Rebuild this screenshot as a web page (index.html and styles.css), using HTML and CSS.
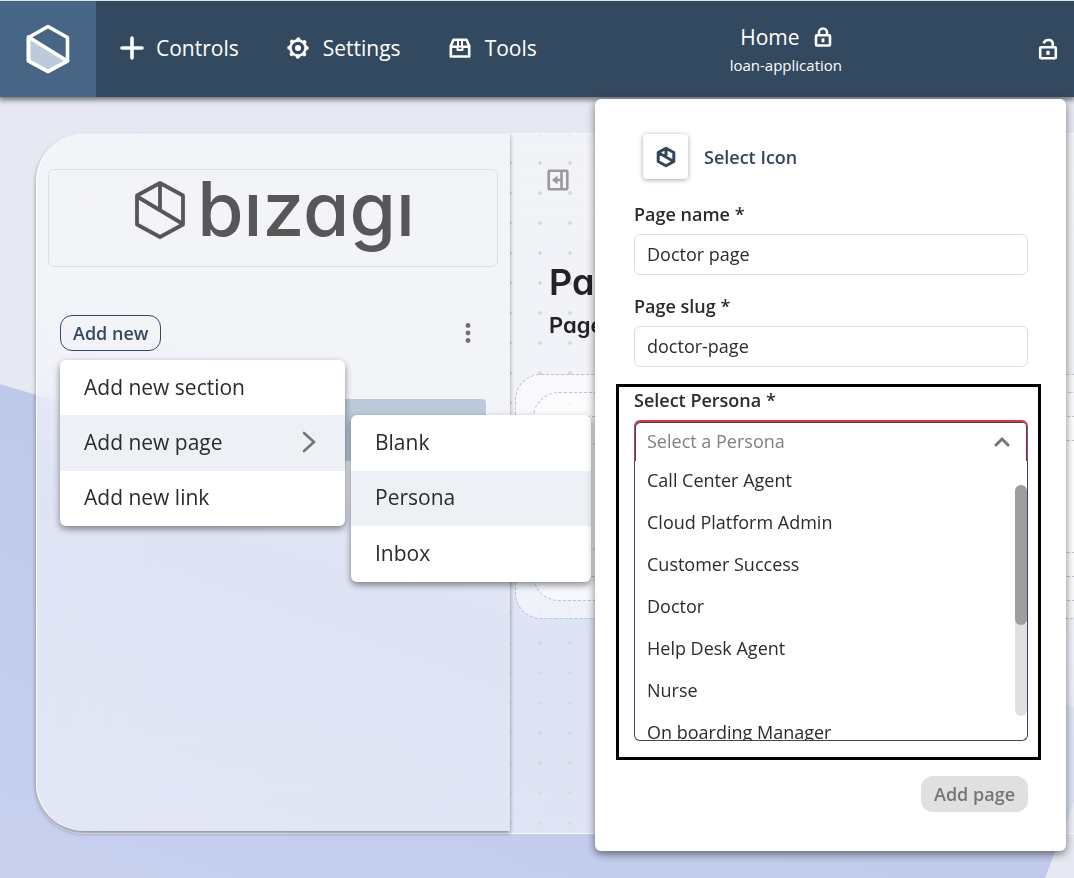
FILE: index.html
```html
<!DOCTYPE html>
<html lang="en">
<head>
<meta charset="utf-8">
<meta name="viewport" content="width=device-width, initial-scale=1">
<title>Home - loan-application</title>
<link rel="stylesheet" href="styles.css">
</head>
<body>
<header class="topbar">
  <a class="brand" href="#" aria-label="Start">
    <svg width="44" height="50" viewBox="0 0 44 50" fill="none" stroke="#fff" stroke-width="3.6" stroke-linejoin="round">
      <path d="M2.5 13v24L22 47.5 41.5 37z" fill="#bccbdc"/>
      <path d="M22 2.500L41.500 13.500V37L22 47.500 2.500 37V13.500z"/>
    </svg>
  </a>
  <nav class="tools">
    <button class="tool" type="button">
      <svg width="24" height="24" viewBox="0 0 24 24" stroke="#fff" stroke-width="3.6" stroke-linecap="round"><path d="M12 2v20M2 12h20"/></svg>
      Controls
    </button>
    <button class="tool" type="button">
      <svg width="24" height="22" viewBox="0 0 24 22" fill="none" stroke="#fff">
        <circle cx="11" cy="11" r="7.600" stroke-width="2.600"/>
        <circle cx="11" cy="11" r="8.800" stroke-width="4" stroke-linecap="round" stroke-dasharray="0.100 6.812"/>
        <circle cx="11" cy="11" r="3" fill="#fff" stroke="none"/>
      </svg>
      Settings
    </button>
    <button class="tool" type="button">
      <svg width="24" height="22" viewBox="0 0 24 22" fill="none" stroke="#fff" stroke-width="2.600" stroke-linejoin="round">
        <path d="M1.800 9 4.500 2.800h13L20.200 9v10.500H1.800zM1.800 9.800h7M13.200 9.800h7"/>
        <path d="M8.500 9.500h5v3.500h-5zM9 9V3M13 9V3" stroke-width="2"/>
      </svg>
      Tools
    </button>
  </nav>
  <div class="page-id">
    <div class="page-name">Home
      <svg width="18" height="20" viewBox="0 0 18 20" fill="none" stroke="#fff" stroke-width="2.600"><rect x="2" y="8.200" width="14" height="10.300" rx="1"/><path d="M5 8V5.500a4 4 0 0 1 8 0V8"/><path d="M9 11.300v4" stroke-width="2.800"/></svg>
    </div>
    <div class="page-slug">loan-application</div>
  </div>
  <button class="lock" type="button" aria-label="Unlock">
    <svg width="20" height="22" viewBox="0 0 20 22" fill="none" stroke="#fff" stroke-width="2.600"><rect x="2.200" y="9.300" width="15.600" height="11" rx="1"/><path d="M5.600 5.400C6.400 2.800 8.500 2 10.600 2c2.700 0 4.200 1.800 4.200 4.200V9"/><path d="M10 12.800v4" stroke-width="3.200"/></svg>
  </button>
</header>

<main class="stage">
  <div class="workspace">
    <aside class="sidebar">
      <div class="logo">
        <svg width="50" height="58" viewBox="0 0 50 58" fill="none" stroke="#575757" stroke-width="3.800" stroke-linejoin="round"><path d="M25 2 48 14.500v29L25 56 2 43.500v-29zM2 15.500 48 43M25 2v27"/></svg>
        <span class="wordmark">bızagı</span>
      </div>
      <div class="sidebar-row">
        <button class="add-new" type="button">Add new</button>
        <button class="kebab" type="button" aria-label="More options">
          <svg width="6" height="20" viewBox="0 0 6 20" fill="#6e6e6e"><circle cx="3" cy="2.500" r="2.400"/><circle cx="3" cy="10" r="2.400"/><circle cx="3" cy="17.500" r="2.400"/></svg>
        </button>
        <div class="menu" role="menu">
          <button class="menu-item" type="button" role="menuitem">Add new section</button>
          <button class="menu-item active" type="button" role="menuitem">Add new page
            <svg width="14" height="22" viewBox="0 0 14 22" fill="none" stroke="#757575" stroke-width="2.600" stroke-linecap="round"><path d="M2 2l10 9L2 20"/></svg>
          </button>
          <button class="menu-item" type="button" role="menuitem">Add new link</button>
          <div class="menu submenu" role="menu">
            <button class="menu-item" type="button" role="menuitem">Blank</button>
            <button class="menu-item active" type="button" role="menuitem">Persona</button>
            <button class="menu-item" type="button" role="menuitem">Inbox</button>
          </div>
        </div>
      </div>
      <a class="current-page" href="#" aria-label="Current page"></a>
    </aside>
    <section class="canvas">
      <button class="collapse" type="button" aria-label="Collapse menu">
        <svg width="22" height="22" viewBox="0 0 22 22" fill="none" stroke="#9a9a9a" stroke-width="2.600"><rect x="1.700" y="1.700" width="18.600" height="18.600" rx="1"/><path d="M14.500 2v18M14 11H8"/><path d="M10.500 6.500v9L5 11z" fill="#9a9a9a" stroke="none"/></svg>
      </button>
      <h1 class="title">Page</h1>
      <h2 class="subtitle">Page</h2>
      <div class="zone"><div class="zone zone-row"><div class="zone zone-col"><div class="zone zone-cell"></div></div></div></div>
    </section>
  </div>
</main>

<form class="dialog">
  <button class="icon-pick" type="button">
    <span class="icon-tile">
      <svg width="20" height="22" viewBox="0 0 20 22" fill="none" stroke="#33475b" stroke-width="3" stroke-linejoin="round"><path d="M10 2.200 17.800 6.500v9L10 19.800 2.200 15.500v-9zM2.200 6.500 17.800 15.500M10 2v9"/></svg>
    </span>
    Select Icon
  </button>
  <label class="label" for="name">Page name *</label>
  <input class="field" id="name" type="text" value="Doctor page">
  <label class="label label-next" for="slug">Page slug *</label>
  <input class="field" id="slug" type="text" value="doctor-page">
  <div class="highlight">
    <label class="label" for="persona">Select Persona *</label>
    <div class="select-wrap">
      <select class="field select" id="persona"><option>Select a Persona</option></select>
      <svg class="chevron" width="16" height="11" viewBox="0 0 16 11" fill="none" stroke="#757575" stroke-width="3" stroke-linecap="round"><path d="M2 9l6-6 6 6"/></svg>
    </div>
    <div class="options">
      <ul class="option-list" role="listbox" aria-label="Persona">
        <li class="option" role="option">Call Center Agent</li>
        <li class="option" role="option">Cloud Platform Admin</li>
        <li class="option" role="option">Customer Success</li>
        <li class="option" role="option">Doctor</li>
        <li class="option" role="option">Help Desk Agent</li>
        <li class="option" role="option">Nurse</li>
        <li class="option" role="option">On boarding Manager</li>
      </ul>
      <div class="track"><div class="thumb"></div></div>
    </div>
  </div>
  <button class="submit" type="button" disabled>Add page</button>
</form>
</body>
</html>
```
FILE: styles.css
```css
* { box-sizing: border-box; }
body {
  margin: 0;
  min-height: 100vh;
  display: flex;
  flex-direction: column;
  position: relative;
  overflow: hidden;
  background: #e6e9f2;
  color: #2b2b2b;
  font-family: "Open Sans", "Noto Sans", sans-serif;
}
button, input, select { font: inherit; color: inherit; }
button { border: 0; padding: 0; background: none; }
svg { display: block; flex: none; }

.topbar {
  display: flex;
  align-items: center;
  height: 97px;
  border-top: 1px solid #dde5e0;
  background: #33495f;
  color: #fff;
  box-shadow: 0 2px 5px 1px rgba(0, 0, 0, .5);
  z-index: 2;
}
.brand {
  width: 96px;
  align-self: stretch;
  display: grid;
  place-items: center;
  background: #476685;
}
.tools { display: flex; gap: 48px; margin-left: 24px; padding-bottom: 2px; }
.tool { display: flex; align-items: center; gap: 12px; font-size: 21px; line-height: 28px; }
.page-id { margin-left: auto; margin-right: 196px; padding-top: 4px; text-align: center; }
.page-name { display: flex; justify-content: center; align-items: center; gap: 14px; font-size: 21px; line-height: 28px; }
.page-slug { font-size: 15px; line-height: 28px; }
.lock { margin-right: 16px; }

.stage { flex: 1; padding: 36px 0 44px 36px; position: relative; }
.stage::before {
  content: "";
  position: absolute;
  inset: 0;
  background: linear-gradient(20deg, #c8d0ee, #bbc6e9 55%, #bac4e8);
  clip-path: polygon(0 287px, 103% 620px, 1045px 100%, 0 100%);
}
.workspace {
  height: 701px;
  display: flex;
  position: relative;
  border-radius: 48px 0 0 48px;
  border-top: 1px solid #f8f9fc;
  border-bottom: 1px solid #f8f9fc;
  background: rgba(255, 255, 255, .48);
  backdrop-filter: blur(44px);
}
.sidebar {
  width: 474px;
  height: 697px;
  padding: 35px 12px 0 11px;
  border-left: 1px solid #fff;
  border-radius: 48px 0 0 48px;
  background: rgba(255, 255, 255, .04);
  box-shadow: 0 2px 4px rgba(0, 0, 0, .4);
  position: relative;
  z-index: 2;
}
.logo {
  height: 98px;
  display: flex;
  justify-content: center;
  gap: 12px;
  padding: 11px 0 0 4px;
  border: 1px solid #dddede;
  border-radius: 6px;
}
.wordmark {
  font: 500 75px/56px Inter, sans-serif;
  font-feature-settings: "cv11";
  color: #575757;
}
.sidebar-row {
  display: flex;
  justify-content: space-between;
  align-items: center;
  margin: 48px 24px 0 12px;
  position: relative;
}
.add-new {
  height: 36px;
  padding: 0 12px;
  border: 1px solid #33495f;
  border-radius: 12px;
  color: #33495f;
  font-size: 18px;
  font-weight: 600;
}
.kebab { padding: 0 3px; }
.current-page { display: block; height: 62px; margin: 48px 12px 0; border-radius: 4px; background: #bccbdc; }

.menu {
  position: absolute;
  top: 45px;
  left: 0;
  width: 285px;
  height: 166px;
  display: grid;
  grid-auto-rows: 1fr;
  border-radius: 6px;
  background: #fff;
  box-shadow: 0 3px 7px rgba(0, 0, 0, .45);
}
.submenu { top: 55px; left: 291px; width: 240px; height: 167px; }
.menu-item {
  display: flex;
  align-items: center;
  justify-content: space-between;
  padding: 0 29px 2px 24px;
  font-size: 21px;
  text-align: left;
}
.menu-item.active { background: #edf0f5; }

.canvas {
  flex: 1;
  min-width: 0;
  padding: 35px 0 0 5px;
  overflow: hidden;
  background: radial-gradient(circle, #d9dadd 2px, transparent 2px) -15px -16px / 30px 30px;
}
.collapse { display: block; margin-left: 32px; }
.title, .subtitle { margin: 0 0 0 34px; font-family: Inter, sans-serif; font-feature-settings: "cv11"; font-weight: 600; color: #232323; }
.title { margin-top: 67px; font-size: 36px; line-height: 48px; }
.subtitle { margin-top: 3px; font-size: 22px; line-height: 32px; }
.zone {
  margin: 33px -40px 0 0;
  padding: 17px;
  border: 1px dashed #b0c6dd;
  border-radius: 26px;
  background: rgba(255, 255, 255, .5);
  background-clip: padding-box;
}
.zone .zone { margin-top: 0; }
.zone-row { padding: 23px; }
.zone-col { padding: 23px; border-radius: 20px; }
.zone-cell { height: 113px; }

.dialog {
  position: absolute;
  top: 99px;
  right: 8px;
  width: 471px;
  padding: 35px 38px 39px 39px;
  display: flex;
  flex-direction: column;
  border-radius: 6px;
  background: #fff;
  box-shadow: 0 3px 8px rgba(0, 0, 0, .5);
  z-index: 3;
  font-size: 18px;
}
.icon-pick {
  align-self: flex-start;
  display: flex;
  align-items: center;
  gap: 16px;
  margin-left: 9px;
  color: #33475b;
  font-weight: 600;
}
.icon-tile {
  width: 45px;
  height: 45px;
  display: grid;
  place-items: center;
  border-radius: 4px;
  background: #fff;
  box-shadow: 0 1px 5px rgba(0, 0, 0, .35);
}
.label { display: block; margin-top: 23px; line-height: 24px; font-weight: 600; }
.label-next { margin-top: 19px; }
.field {
  display: block;
  width: 100%;
  height: 41px;
  margin-top: 8px;
  padding: 0 12px 2px;
  border: 1px solid #dedede;
  border-radius: 6px;
  background: #fff;
}
.highlight { margin: 17px -13px 0 -18px; padding: 1px 10px 16px 15px; border: 3px solid #000; }
.highlight .label { margin-top: 0; }
.select-wrap { position: relative; }
.select {
  appearance: none;
  border: 1px solid #d8383f;
  border-top-width: 2px;
  border-bottom: 0;
  border-radius: 6px 6px 0 0;
  box-shadow: inset 1px 1px #33495f, inset -1px 0 #33495f;
  color: #808080;
}
.chevron { position: absolute; right: 18px; top: 16px; }
.options {
  position: relative;
  height: 280px;
  border: 1px solid #33495f;
  border-top: 0;
  border-radius: 0 0 6px 6px;
  overflow: hidden;
}
.option-list { list-style: none; margin: -2px 0 0; padding: 0; }
.option { padding: 0 12px; line-height: 42px; }
.track { position: absolute; top: 24px; right: 0; width: 12px; height: 231px; border-radius: 6px; background: #e0e0e0; }
.thumb { height: 140px; border-radius: 6px; background: #9e9e9e; }
.submit {
  align-self: flex-end;
  height: 36px;
  margin-top: 16px;
  padding: 0 13px;
  border-radius: 12px;
  background: #e0e0e0;
  color: #757575;
  font-size: 18px;
  font-weight: 600;
}
```
